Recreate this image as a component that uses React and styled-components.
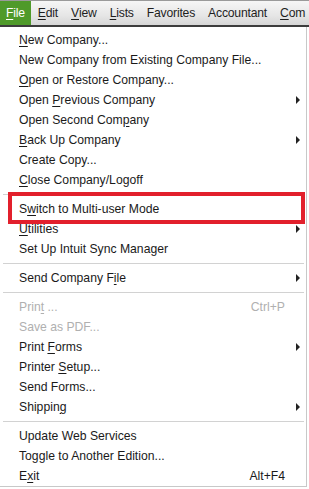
import styled, { createGlobalStyle } from 'styled-components';

const GlobalStyle = createGlobalStyle`
  html, body {
    margin: 0;
    padding: 0;
    background: #ffffff;
  }
  body {
    font-family: 'Liberation Sans', Arial, sans-serif;
    width: 309px;
    height: 489px;
    overflow: hidden;
  }
`;

const menuBar = [
  { label: 'File', key: 'F', active: true },
  { label: 'Edit', key: 'E' },
  { label: 'View', key: 'V' },
  { label: 'Lists', key: 'L' },
  { label: 'Favorites' },
  { label: 'Accountant' },
  { label: 'Com', key: 'C' },
];

const items = [
  { label: 'New Company...', key: 0 },
  { label: 'New Company from Existing Company File...' },
  { label: 'Open or Restore Company...', key: 0 },
  { label: 'Open Previous Company', key: 5, sub: true },
  { label: 'Open Second Company', key: 15 },
  { label: 'Back Up Company', key: 0, sub: true },
  { label: 'Create Copy...' },
  { label: 'Close Company/Logoff', key: 0 },
  { sep: true },
  { label: 'Switch to Multi-user Mode', key: 1, marked: true },
  { label: 'Utilities', key: 0, sub: true },
  { label: 'Set Up Intuit Sync Manager' },
  { sep: true },
  { label: 'Send Company File', key: 14, sub: true },
  { sep: true },
  { label: 'Print ...', key: 4, disabled: true, shortcut: 'Ctrl+P' },
  { label: 'Save as PDF...', disabled: true },
  { label: 'Print Forms', key: 6, sub: true },
  { label: 'Printer Setup...', key: 8 },
  { label: 'Send Forms...' },
  { label: 'Shipping', key: 7, sub: true },
  { sep: true },
  { label: 'Update Web Services' },
  { label: 'Toggle to Another Edition...' },
  { label: 'Exit', key: 1, shortcut: 'Alt+F4' },
];

function Mnemonic({ text, at }) {
  if (at === undefined) return text;
  return (
    <>
      {text.slice(0, at)}
      <u>{text[at]}</u>
      {text.slice(at + 1)}
    </>
  );
}

export default function App() {
  return (
    <>
      <GlobalStyle />
      <Bar>
        {menuBar.map((m) => (
          <BarItem key={m.label} active={m.active}>
            {m.key ? <Mnemonic text={m.label} at={m.label.indexOf(m.key)} /> : m.label}
          </BarItem>
        ))}
      </Bar>
      <Menu>
        {items.map((it, i) =>
          it.sep ? (
            <Separator key={i} />
          ) : (
            <Row key={i} disabled={it.disabled}>
              <Label>
                <Mnemonic text={it.label} at={it.key} />
              </Label>
              {it.shortcut && <Shortcut>{it.shortcut}</Shortcut>}
              {it.sub && <Arrow />}
              {it.marked && <Highlight />}
            </Row>
          )
        )}
      </Menu>
    </>
  );
}

const Bar = styled.div`
  display: flex;
  height: 27px;
  box-sizing: border-box;
  background: linear-gradient(#f6f6f6, #e6e6e6 60%, #d6d6d6);
  border-top: 1px solid #9a9a9a;
  border-bottom: 2px solid #3c3c3c;
  white-space: nowrap;
  overflow: hidden;
`;

const BarItem = styled.div`
  display: flex;
  align-items: center;
  flex-shrink: 0;
  padding: 0 6px;
  margin-right: 1px;
  font-size: 12.2px;
  letter-spacing: -0.2px;
  color: ${(p) => (p.active ? '#ffffff' : '#1e1e1e')};
  background: ${(p) => (p.active ? '#4f9a2a' : 'transparent')};
  u {
    text-underline-offset: 2px;
  }
`;

const Menu = styled.div`
  width: 307px;
  box-sizing: border-box;
  padding-top: 3px;
  border-right: 1px solid #c8c8c8;
  border-bottom: 1px solid #c8c8c8;
`;

const Row = styled.div`
  position: relative;
  display: flex;
  align-items: center;
  height: 20px;
  padding-left: 19px;
  padding-right: 21px;
  font-size: 12.2px;
  color: ${(p) => (p.disabled ? '#b0b0b0' : '#1a1a1a')};
  u {
    text-underline-offset: 2px;
  }
`;

const Label = styled.span`
  flex: 1;
  white-space: nowrap;
`;

const Shortcut = styled.span`
  white-space: nowrap;
`;

const Arrow = styled.span`
  position: absolute;
  right: 6px;
  top: 6px;
  width: 0;
  height: 0;
  border-top: 4px solid transparent;
  border-bottom: 4px solid transparent;
  border-left: 4px solid #222;
`;

const Separator = styled.div`
  height: 9px;
  display: flex;
  align-items: center;
  padding: 0 2px 0 3px;
  &::before {
    content: '';
    flex: 1;
    height: 1px;
    background: #d2d2d2;
  }
`;

const Highlight = styled.div`
  position: absolute;
  left: 8px;
  top: -7px;
  width: 297px;
  height: 32px;
  box-sizing: border-box;
  border: 4px solid #e2202c;
  pointer-events: none;
`;
